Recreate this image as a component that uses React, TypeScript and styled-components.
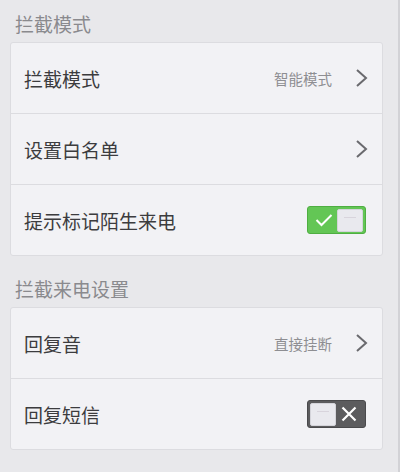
import React from "react";
import styled, { createGlobalStyle } from "styled-components";

const Global = createGlobalStyle`
  html, body { margin: 0; padding: 0; background: #e8e8eb; }
  body { font-family: "Noto Sans CJK SC", "Noto Sans", sans-serif; }
`;

const Page = styled.div`
  width: 400px;
  height: 472px;
  box-sizing: border-box;
  overflow: hidden;
  background: #e8e8eb;
  padding: 0 15px 0 10px;
  border-right: 2px solid #d2d2d6;
`;

const Header = styled.div<{ $h: number }>`
  height: ${(p) => p.$h}px;
  display: flex;
  align-items: flex-end;
  padding: 0 0 9px 5px;
  box-sizing: border-box;
  font-size: 19px;
  line-height: 19px;
  color: #8a8a8e;
`;

const Card = styled.div`
  background: #f2f2f5;
  border: 1px solid #dcdce0;
  border-radius: 3px;
`;

const Row = styled.div`
  height: 70px;
  display: flex;
  align-items: center;
  padding: 0 14px 0 13px;
  & + & { border-top: 1px solid #dcdce0; }
`;

const Label = styled.div`
  flex: 1;
  font-size: 19px;
  color: #3c3c3e;
`;

const Value = styled.div`
  font-size: 14.5px;
  color: #8e8e92;
  margin-right: 23px;
`;

const Toggle = styled.div<{ $on: boolean }>`
  width: 59px;
  height: 28px;
  box-sizing: border-box;
  margin-right: 2px;
  border-radius: 3px;
  border: 1px solid ${(p) => (p.$on ? "#4fae42" : "#4a4a4c")};
  background: ${(p) => (p.$on ? "#63c655" : "#5c5c5e")};
  display: flex;
  align-items: center;
  flex-direction: ${(p) => (p.$on ? "row" : "row-reverse")};
  justify-content: space-between;
  padding: 0 2px;
`;

const Knob = styled.div`
  width: 26px;
  height: 23px;
  box-sizing: border-box;
  background: #e9e9ee;
  border: 1px solid #d4d4da;
  border-radius: 2px;
  position: relative;
  &::after {
    content: "";
    position: absolute;
    left: 6px;
    right: 6px;
    top: 7px;
    height: 1px;
    background: #d8d4dc;
  }
`;

const Mark = styled.div`
  width: 28px;
  display: flex;
  justify-content: center;
  align-items: center;
`;

const Chevron = () => (
  <svg width="13" height="18" viewBox="0 0 13 18">
    <polyline points="2,1 11,9 2,17" fill="none" stroke="#6a6a6e" strokeWidth="2" strokeLinejoin="miter" />
  </svg>
);

const Check = () => (
  <svg width="18" height="14" viewBox="0 0 18 14">
    <polyline points="1.5,7 6.5,12 16.5,2" fill="none" stroke="#ffffff" strokeWidth="2" />
  </svg>
);

const Cross = () => (
  <svg width="16" height="16" viewBox="0 0 16 16">
    <path d="M1.5 1.5 L14.5 14.5 M14.5 1.5 L1.5 14.5" stroke="#ffffff" strokeWidth="2.2" />
  </svg>
);

const Switch = ({ on }: { on: boolean }) => (
  <Toggle $on={on}>
    <Mark>{on ? <Check /> : <Cross />}</Mark>
    <Knob />
  </Toggle>
);

export default function App() {
  return (
    <>
      <Global />
      <Page>
        <Header $h={42}>拦截模式</Header>
        <Card>
          <Row>
            <Label>拦截模式</Label>
            <Value>智能模式</Value>
            <Chevron />
          </Row>
          <Row>
            <Label>设置白名单</Label>
            <Chevron />
          </Row>
          <Row>
            <Label>提示标记陌生来电</Label>
            <Switch on />
          </Row>
        </Card>
        <Header $h={51}>拦截来电设置</Header>
        <Card>
          <Row>
            <Label>回复音</Label>
            <Value>直接挂断</Value>
            <Chevron />
          </Row>
          <Row>
            <Label>回复短信</Label>
            <Switch on={false} />
          </Row>
        </Card>
        <Header $h={51}>其他设置</Header>
      </Page>
    </>
  );
}
